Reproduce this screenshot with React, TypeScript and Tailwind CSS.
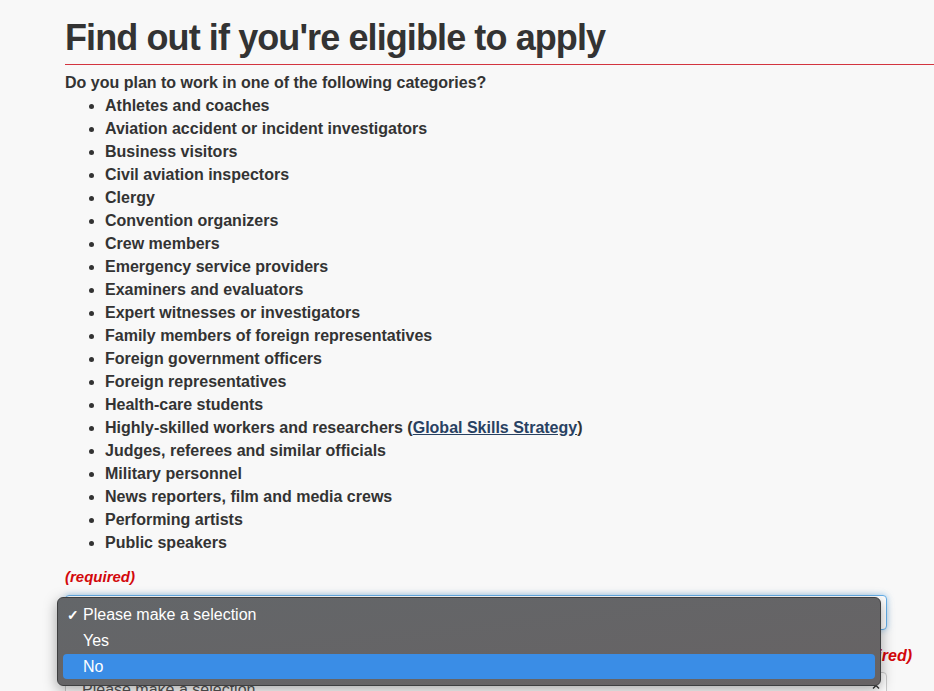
import React from 'react';

const categories = [
  'Athletes and coaches',
  'Aviation accident or incident investigators',
  'Business visitors',
  'Civil aviation inspectors',
  'Clergy',
  'Convention organizers',
  'Crew members',
  'Emergency service providers',
  'Examiners and evaluators',
  'Expert witnesses or investigators',
  'Family members of foreign representatives',
  'Foreign government officers',
  'Foreign representatives',
  'Health-care students',
  'HSW',
  'Judges, referees and similar officials',
  'Military personnel',
  'News reporters, film and media crews',
  'Performing artists',
  'Public speakers',
];

const Chevrons: React.FC = () => (
  <svg width="8" height="12" viewBox="0 0 8 12" className="text-[#333]">
    <path d="M1 4.5 L4 1.5 L7 4.5" fill="none" stroke="currentColor" strokeWidth="1.4" />
    <path d="M1 7.5 L4 10.5 L7 7.5" fill="none" stroke="currentColor" strokeWidth="1.4" />
  </svg>
);

const App: React.FC = () => {
  return (
    <div className="h-[691px] overflow-hidden bg-[#f8f8f8] text-[#333] font-['Liberation_Sans',Arial,sans-serif]">
      <div className="pl-[65px]">
        <h1 className="pt-[17px] pb-[5px] text-[36px] leading-[42px] font-bold tracking-[-0.9px]">
          Find out if you're eligible to apply
        </h1>
        <div className="h-px bg-[#d3343f]" />

        <div className="w-[847px]">
          <p className="mt-[6px] text-[16px] leading-[23px] font-bold">
            Do you plan to work in one of the following categories?
          </p>
          <ul className="list-disc pl-[40px] text-[16px] leading-[23px] font-bold">
            {categories.map((c) =>
              c === 'HSW' ? (
                <li key={c}>
                  Highly-skilled workers and researchers (
                  <a href="#" className="text-[#284162] underline">
                    Global Skills Strategy
                  </a>
                  )
                </li>
              ) : (
                <li key={c}>{c}</li>
              ),
            )}
          </ul>

          <p className="mt-[11px] text-[15px] leading-[23px] font-bold italic text-[#d3080c]">(required)</p>

          <div className="relative mt-[7px] w-[822px]">
            <div className="h-[35px] rounded-[4px] border border-[#66afe9] shadow-[0_0_6px_rgba(102,175,233,0.6)] bg-white flex items-center justify-between pl-[16px] pr-[6px]">
              <span className="text-[16px] text-[#555]">Please make a selection</span>
              <Chevrons />
            </div>

            {/* native select popup */}
            <div className="absolute z-10 left-[-8px] top-[2px] w-[824px] h-[89px] rounded-[6px] border border-[#3e3f40] bg-gradient-to-br from-[#636669] to-[#676364] shadow-[0_4px_14px_rgba(0,0,0,0.35)] px-[5px] py-[4px] text-white text-[16px]">
              <div className="h-[26px] flex items-center pl-[4px]">
                <span className="w-[16px] text-[14px] font-bold">✓</span>
                <span>Please make a selection</span>
              </div>
              <div className="h-[26px] flex items-center pl-[20px]">Yes</div>
              <div className="h-[25px] flex items-center pl-[20px] rounded-[4px] bg-[#3a8de6]">No</div>
            </div>
          </div>

          <p className="mt-[14px] text-[16px] leading-[23px] font-bold text-right">
            Do you have a valid job offer?{' '}
            <span className="italic text-[#d3080c]">(required)</span>
          </p>

          <div className="mt-[5px] w-[822px] h-[35px] rounded-[4px] border border-[#ccc] bg-white flex items-center justify-between pl-[16px] pr-[6px]">
            <span className="text-[16px] text-[#555]">Please make a selection</span>
            <Chevrons />
          </div>
        </div>
      </div>
    </div>
  );
};

export default App;
